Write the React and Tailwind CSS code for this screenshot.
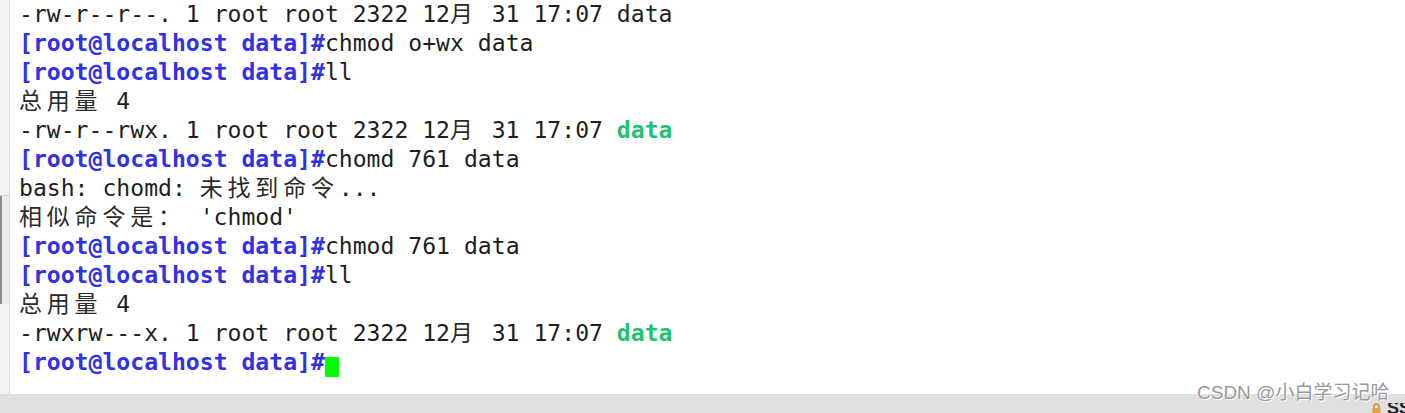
const BLUE = "text-[#3131e6] font-bold";
const GREEN = "text-[#1fc372] font-bold";

const lines = [
  [["-rw-r--r--. 1 root root 2322 12月 31 17:07 data"]],
  [["[root@localhost data]#", BLUE], ["chmod o+wx data"]],
  [["[root@localhost data]#", BLUE], ["ll"]],
  [["总用量 4"]],
  [["-rw-r--rwx. 1 root root 2322 12月 31 17:07 "], ["data", GREEN]],
  [["[root@localhost data]#", BLUE], ["chomd 761 data"]],
  [["bash: chomd: 未找到命令..."]],
  [["相似命令是： 'chmod'"]],
  [["[root@localhost data]#", BLUE], ["chmod 761 data"]],
  [["[root@localhost data]#", BLUE], ["ll"]],
  [["总用量 4"]],
  [["-rwxrw---x. 1 root root 2322 12月 31 17:07 "], ["data", GREEN]],
];

// wide (CJK) characters take two terminal cells
const Cells = ({ text }) => {
  const parts = text.split(/([\u3000-\u9fff\uff00-\uffef])/).filter(Boolean);
  return parts.map((p, i) =>
    /^[\u3000-\u9fff\uff00-\uffef]$/.test(p) ? (
      <span
        key={i}
        className="inline-block w-[27.8px] font-['Noto_Sans_CJK_SC'] text-[23px] leading-none text-[#2a2a2a]"
      >
        {p}
      </span>
    ) : (
      <span key={i}>{p}</span>
    )
  );
};

export default function App() {
  return (
    <div className="relative w-[1405px] h-[413px] bg-white overflow-hidden flex flex-col">
      <div className="flex h-[394px]">
        {/* left gutter */}
        <div className="w-[10px] shrink-0 bg-[#f3f3f3] border-r border-[#dcdcdc] flex flex-col">
          <div className="h-[196px] border-b border-[#d0d0d0]" />
          <div className="h-[108px] border-l-2 border-[#8c8c8c] bg-[#ececec]" />
        </div>

        <div className="flex-1 pl-[9px] font-['DejaVu_Sans_Mono',monospace] text-[23.1px] leading-[29px] text-[#1e1e1e] whitespace-pre">
          {lines.map((segs, i) => (
            <div key={i} className="h-[29px]">
              {segs.map(([t, cls], j) => (
                <span key={j} className={cls}>
                  <Cells text={t} />
                </span>
              ))}
            </div>
          ))}
          <div className="h-[29px]">
            <span className={BLUE}>[root@localhost data]#</span>
            <span className="inline-block w-[14px] h-[20px] bg-[#00ff00] align-[-7px]" />
          </div>
        </div>
      </div>

      {/* status bar */}
      <div className="h-[19px] bg-[#dfdfdf] flex items-end justify-end">
        <div className="flex items-center gap-[5px] h-[10px] mr-[-4px]">
          <svg width="11" height="10" viewBox="0 0 11 10">
            <path d="M3 5V3.5a2.5 2.5 0 0 1 5 0V5" fill="none" stroke="#d08a2a" strokeWidth="1.4" />
            <rect x="1.5" y="5" width="8" height="5" fill="#e8a040" />
          </svg>
          <span className="font-['Liberation_Sans',sans-serif] text-[18px] leading-[10px] text-[#222] font-bold w-[22px] overflow-hidden">
            SS
          </span>
        </div>
      </div>

      {/* watermark */}
      <div className="absolute left-[1197px] top-[381px] font-['Liberation_Sans','Noto_Sans_CJK_SC',sans-serif] text-[19px] leading-[24px] text-[#9a9a9a] [text-shadow:0_0_1px_#fff,1px_1px_0_#fff]">
        CSDN @小白学习记哈
      </div>
    </div>
  );
}
